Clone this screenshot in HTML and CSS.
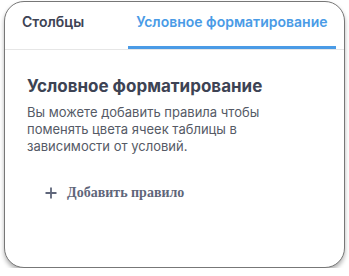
FILE: index.html
```html
<!DOCTYPE html>
<html>
<head>
  <title>Условное форматирование</title>
  <link rel="stylesheet" href="styles.css">
</head>
<body>
  <div class="panel">
    <div class="tabs">
      <div class="tab">Столбцы</div>
      <div class="tab active">Условное форматирование</div>
    </div>

    <div class="content">
      <h2 class="title">Условное форматирование</h2>
      <p class="hint">Вы можете добавить правила чтобы поменять цвета ячеек таблицы в зависимости от условий.</p>

      <button type="button" class="add-rule">
        <svg width="12" height="12" viewBox="0 0 12 12">
          <path d="M6 0.5V11.5M0.5 6H11.5" stroke="#5f667a" stroke-width="1.8" fill="none"/>
        </svg>
        <span>Добавить правило</span>
      </button>
    </div>
  </div>
</body>
</html>
```

FILE: styles.css
```css
body {
  font-family: Inter, "Noto Sans", sans-serif;
  background-color: #fff;
  color: #3d4354;
  margin: 0;
  padding: 0;
}

.panel {
  width: 339px;
  height: 265px;
  margin: 1px 0 0 4px;
  border: 1px solid #777;
  border-radius: 20px;
  box-shadow: 0 3px 4px rgba(0, 0, 0, 0.3);
  background-color: #fff;
  overflow: hidden;
}

.tabs {
  display: flex;
  gap: 36px;
  padding-left: 9px;
  border-bottom: 1px solid #e6e6e6;
}

.tab {
  padding: 11px 8px 0;
  height: 33px;
  line-height: 18px;
  font-size: 14px;
  font-weight: 600;
  color: #3d4354;
  border-bottom: 3px solid transparent;
}

.tab.active {
  color: #4a9be6;
  border-bottom-color: #4a9be6;
}

.content {
  padding: 26px 22px 0;
}

.title {
  margin: 0;
  font-size: 17px;
  line-height: 20px;
  font-weight: 700;
  color: #3d4354;
}

.hint {
  margin: 8px 0 0;
  width: 245px;
  font-size: 13px;
  line-height: 17px;
  color: #555a66;
}

.add-rule {
  display: flex;
  align-items: center;
  gap: 10px;
  margin: 30px 0 0 18px;
  padding: 0;
  border: none;
  background: none;
  font-family: "Liberation Serif", serif;
  font-size: 14px;
  font-weight: 700;
  color: #5f667a;
  cursor: pointer;
}
```
